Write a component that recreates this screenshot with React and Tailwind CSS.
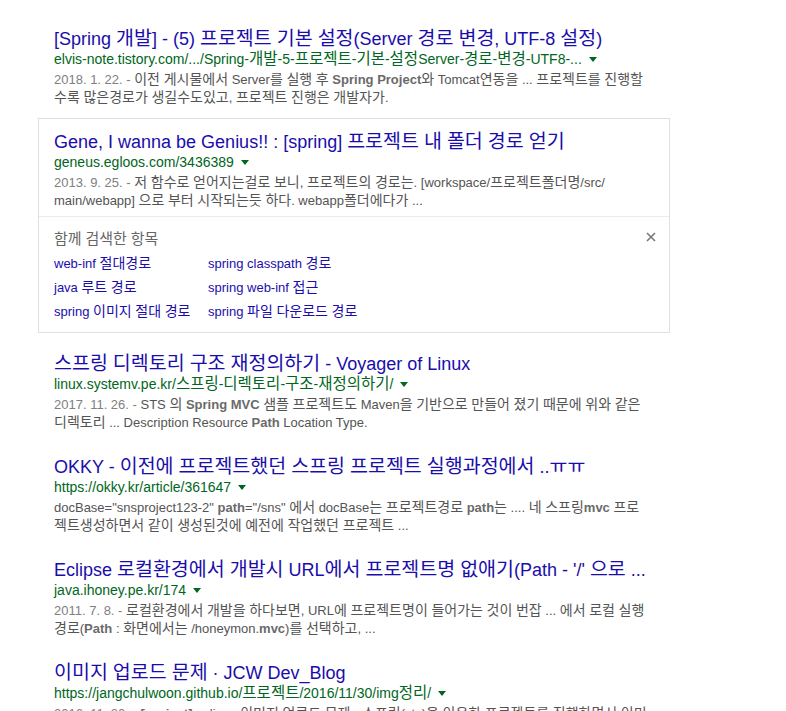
import React from 'react';

// Hangul in the Noto fallback runs narrower than in the reference, so those runs get their own size.
const HANGUL = /([\u3131-\u318E\uAC00-\uD7A3]+)/;

const Ko = ({ text, cls }) =>
  text.split(HANGUL).map((part, i) =>
    HANGUL.test(part) ? (
      <span key={i} className={cls}>{part}</span>
    ) : (
      <React.Fragment key={i}>{part}</React.Fragment>
    )
  );

const firstResult = {
  title: '[Spring 개발] - (5) 프로젝트 기본 설정(Server 경로 변경, UTF-8 설정)',
  url: 'elvis-note.tistory.com/.../Spring-개발-5-프로젝트-기본-설정Server-경로-변경-UTF8-...',
  date: '2018. 1. 22. - ',
  lines: [
    ['이전 게시물에서 Server를 실행 후 ', { b: 'Spring Project' }, '와 Tomcat연동을 ... 프로젝트를 진행할'],
    ['수록 많은경로가 생길수도있고, 프로젝트 진행은 개발자가.']
  ]
};

const cardResult = {
  title: 'Gene, I wanna be Genius!! : [spring] 프로젝트 내 폴더 경로 얻기',
  url: 'geneus.egloos.com/3436389',
  date: '2013. 9. 25. - ',
  lines: [
    ['저 함수로 얻어지는걸로 보니, 프로젝트의 경로는. [workspace/프로젝트폴더명/src/'],
    ['main/webapp] 으로 부터 시작되는듯 하다. webapp폴더에다가 ...']
  ]
};

const moreResults = [
  {
    id: 3,
    title: '스프링 디렉토리 구조 재정의하기 - Voyager of Linux',
    url: 'linux.systemv.pe.kr/스프링-디렉토리-구조-재정의하기/',
    date: '2017. 11. 26. - ',
    lines: [
      ['STS 의 ', { b: 'Spring MVC' }, ' 샘플 프로젝트도 Maven을 기반으로 만들어 졌기 때문에 위와 같은'],
      ['디렉토리 ... Description Resource ', { b: 'Path' }, ' Location Type.']
    ]
  },
  {
    id: 4,
    title: 'OKKY - 이전에 프로젝트했던 스프링 프로젝트 실행과정에서 ..ㅠㅠ',
    url: 'https://okky.kr/article/361647',
    date: null,
    lines: [
      ['docBase="snsproject123-2" ', { b: 'path' }, '="/sns" 에서 docBase는 프로젝트경로 ', { b: 'path' }, '는 .... 네 스프링', { b: 'mvc' }, ' 프로'],
      ['젝트생성하면서 같이 생성된것에 예전에 작업했던 프로젝트 ...']
    ]
  },
  {
    id: 5,
    title: "Eclipse 로컬환경에서 개발시 URL에서 프로젝트명 없애기(Path - '/' 으로 ...",
    url: 'java.ihoney.pe.kr/174',
    date: '2011. 7. 8. - ',
    lines: [
      ['로컬환경에서 개발을 하다보면, URL에 프로젝트명이 들어가는 것이 번잡 ... 에서 로컬 실행'],
      ['경로(', { b: 'Path' }, ' : 화면에서는 /honeymon.', { b: 'mvc' }, ')를 선택하고, ...']
    ]
  },
  {
    id: 6,
    title: '이미지 업로드 문제 · JCW Dev_Blog',
    url: 'https://jangchulwoon.github.io/프로젝트/2016/11/30/img정리/',
    date: '2016. 11. 30. - ',
    lines: [
      [{ b: '[project]' }, ' eclipse 이미지 업로드 문제 · 스프링(sts)을 이용한 프로젝트를 진행하면서 이미'],
      ['지 업로드 ...']
    ]
  }
];

const related = [
  'web-inf 절대경로', 'spring classpath 경로',
  'java 루트 경로', 'spring web-inf 접근',
  'spring 이미지 절대 경로', 'spring 파일 다운로드 경로'
];

const Caret = () => (
  <span className="ml-[7px] inline-block h-0 w-0 border-x-[4px] border-t-[5px] border-x-transparent border-t-[#006621]" />
);

const Snippet = ({ date, lines }) => (
  <div className="mt-[3px] text-[13px] leading-[18px] text-[#545454]">
    {lines.map((line, i) => (
      <div key={i} className="whitespace-nowrap">
        {i === 0 && date && <span className="text-[#808080]">{date}</span>}
        {line.map((seg, j) =>
          typeof seg === 'string' ? (
            <Ko key={j} text={seg} cls="text-[14px] leading-none" />
          ) : (
            <b key={j} className="font-bold text-[#6a6a6a]">{seg.b}</b>
          )
        )}
      </div>
    ))}
  </div>
);

const Result = ({ item, className = 'mb-[25px]' }) => (
  <div className={className}>
    <h3 className="whitespace-nowrap text-[18px] leading-[21px] text-[#1a0dab]">
      <a href="#" className="hover:underline">
        <Ko text={item.title} cls="text-[19.5px] leading-none" />
      </a>
    </h3>
    <div className="flex items-center whitespace-nowrap text-[14px] leading-[18px] text-[#006621]">
      <cite className="not-italic">
        <Ko text={item.url} cls="text-[15.5px] leading-none" />
      </cite>
      <Caret />
    </div>
    <Snippet date={item.date} lines={item.lines} />
  </div>
);

export default function App() {
  return (
    <div className="min-h-screen bg-white font-['Liberation_Sans','Noto_Sans_CJK_KR',sans-serif]">
      <div className="box-content w-[600px] pl-[54px] pt-[29px]">
        <Result item={firstResult} className="mb-[11px]" />

        <div className="-ml-[16px] mb-[21px] w-[632px] border border-[#dfdfdf]">
          <div className="px-[15px] pt-[13px] pb-[6px]">
            <Result item={cardResult} className="" />
          </div>
          <div className="border-t border-[#ebebeb] px-[15px] pt-[12px] pb-[8px]">
            <div className="flex items-start justify-between">
              <div className="text-[14px] leading-[20px] text-[#666]">
                <Ko text="함께 검색한 항목" cls="text-[15px] leading-none" />
              </div>
              <button className="mt-[3px] mr-[-2px] p-0">
                <svg width="10" height="10" viewBox="0 0 10 10">
                  <path d="M1 1L9 9M9 1L1 9" stroke="#777" strokeWidth="1.6" />
                </svg>
              </button>
            </div>
            <div className="mt-[3px] grid grid-cols-[154px_1fr] text-[13px] leading-[24px] text-[#1a0dab]">
              {related.map((term) => (
                <a key={term} href="#" className="whitespace-nowrap hover:underline">
                  <Ko text={term} cls="text-[14px] leading-none" />
                </a>
              ))}
            </div>
          </div>
        </div>

        {moreResults.map((item) => (
          <Result key={item.id} item={item} />
        ))}
      </div>
    </div>
  );
}
